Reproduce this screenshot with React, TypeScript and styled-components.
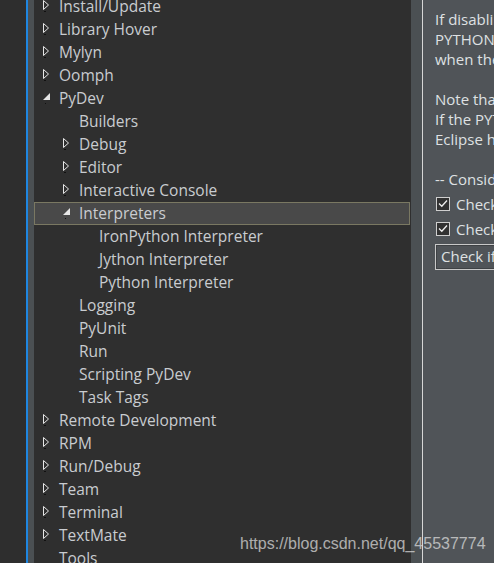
import React from "react";
import styled, { createGlobalStyle } from "styled-components";

const GlobalStyle = createGlobalStyle`
  html, body {
    margin: 0;
    padding: 0;
    background: #2f2f2f;
    overflow: hidden;
  }
`;

const Window = styled.div`
  position: relative;
  display: flex;
  width: 494px;
  height: 563px;
  overflow: hidden;
  font-family: "Open Sans", "Noto Sans", sans-serif;
  font-size: 15.5px;
`;

const Gutter = styled.div`
  flex: 0 0 26px;
  background: #2e2e2e;
`;

const BlueRule = styled.div`
  flex: 0 0 2px;
  background: #1f86e0;
`;

const SideStrip = styled.div<{ $w: number }>`
  flex: 0 0 ${(p) => p.$w}px;
  background: #4b5053;
`;

const Divider = styled.div`
  flex: 0 0 1px;
  background: #d6d6d6;
`;

const Tree = styled.div`
  flex: 0 0 377px;
  background: #2f2f2f;
  overflow: hidden;
`;

const TreeList = styled.div`
  margin-top: -5px;
`;

const Row = styled.div<{ $level: number; $selected?: boolean }>`
  display: flex;
  align-items: center;
  box-sizing: border-box;
  height: 23px;
  padding-left: ${(p) => 8 + p.$level * 20}px;
  padding-bottom: 1px;
  color: #c9ccd0;
  white-space: nowrap;
  background: ${(p) => (p.$selected ? "#494949" : "transparent")};
  border: 1px solid ${(p) => (p.$selected ? "#7a7862" : "transparent")};
  margin-right: 1px;
`;

const Twisty = styled.span`
  flex: 0 0 16px;
  height: 20px;
  display: flex;
  align-items: center;
`;

const Panel = styled.div`
  flex: 1;
  background: #505458;
  padding: 9px 0 0 12px;
  overflow: hidden;
  color: #dfe1e3;
  white-space: nowrap;
  font-size: 15px;
`;

const Line = styled.div`
  height: 20px;
  line-height: 20px;
`;

const Gap = styled.div<{ $h: number }>`
  height: ${(p) => p.$h}px;
`;

const CheckRow = styled.div`
  display: flex;
  align-items: center;
  gap: 6px;
  height: 25px;
  padding-left: 1px;
`;

const Box = styled.span`
  flex: 0 0 14px;
  width: 14px;
  height: 14px;
  box-sizing: border-box;
  border: 1px solid #cfcfcf;
  background: #323232;
  display: flex;
  align-items: center;
  justify-content: center;
`;

const Button = styled.div`
  margin-top: 3px;
  height: 26px;
  box-sizing: border-box;
  border: 1px solid #c8c8c8;
  box-shadow: inset 0 0 0 1px #3e4144;
  padding-left: 5px;
  line-height: 23px;
  width: 300px;
`;

const Watermark = styled.div`
  position: absolute;
  left: 240px;
  top: 535px;
  font-family: "Liberation Sans", Arial, sans-serif;
  font-size: 16px;
  color: rgba(225, 225, 225, 0.72);
  white-space: nowrap;
`;

const Collapsed = () => (
  <svg width="8" height="12" viewBox="0 0 8 12">
    <path d="M0.5 0.5 L5.5 5 L0.5 9.5 Z" fill="none" stroke="#e6e6e6" strokeWidth="1" />
    <rect x="1" y="11" width="2" height="1" fill="#111" />
  </svg>
);

const Expanded = () => (
  <svg width="8" height="12" viewBox="0 0 8 12">
    <path d="M7 1 L7 8 L0 8 Z" fill="#e6e6e6" />
    <rect x="2" y="11" width="1" height="1" fill="#111" />
  </svg>
);

type Node = { label: string; level: number; state?: "open" | "closed"; selected?: boolean };

const nodes: Node[] = [
  { label: "Install/Update", level: 0, state: "closed" },
  { label: "Library Hover", level: 0, state: "closed" },
  { label: "Mylyn", level: 0, state: "closed" },
  { label: "Oomph", level: 0, state: "closed" },
  { label: "PyDev", level: 0, state: "open" },
  { label: "Builders", level: 1 },
  { label: "Debug", level: 1, state: "closed" },
  { label: "Editor", level: 1, state: "closed" },
  { label: "Interactive Console", level: 1, state: "closed" },
  { label: "Interpreters", level: 1, state: "open", selected: true },
  { label: "IronPython Interpreter", level: 2 },
  { label: "Jython Interpreter", level: 2 },
  { label: "Python Interpreter", level: 2 },
  { label: "Logging", level: 1 },
  { label: "PyUnit", level: 1 },
  { label: "Run", level: 1 },
  { label: "Scripting PyDev", level: 1 },
  { label: "Task Tags", level: 1 },
  { label: "Remote Development", level: 0, state: "closed" },
  { label: "RPM", level: 0, state: "closed" },
  { label: "Run/Debug", level: 0, state: "closed" },
  { label: "Team", level: 0, state: "closed" },
  { label: "Terminal", level: 0, state: "closed" },
  { label: "TextMate", level: 0, state: "closed" },
  { label: "Tools", level: 0 },
];

const Check = () => (
  <svg width="10" height="9" viewBox="0 0 10 9">
    <path d="M1 4.5 L3.8 7.3 L9 1.5" fill="none" stroke="#f0f0f0" strokeWidth="1.3" />
  </svg>
);

const App: React.FC = () => {
  return (
    <Window>
      <GlobalStyle />
      <Gutter />
      <BlueRule />
      <SideStrip $w={6} />
      <Tree>
        <TreeList>
          {nodes.map((n) => (
            <Row key={n.label} $level={n.level} $selected={n.selected}>
              <Twisty>
                {n.state === "closed" && <Collapsed />}
                {n.state === "open" && <Expanded />}
              </Twisty>
              {n.label}
            </Row>
          ))}
        </TreeList>
      </Tree>
      <SideStrip $w={11} />
      <Divider />
      <Panel>
        <Line>If disabling checks, it's possible to manually check the</Line>
        <Line>PYTHONPATH in the interpreter configuration page</Line>
        <Line>when the interpreter is changed.</Line>
        <Gap $h={20} />
        <Line>Note that checks are done in the background.</Line>
        <Line>If the PYTHONPATH is changed, a restart of</Line>
        <Line>Eclipse has to be done.</Line>
        <Gap $h={20} />
        <Line>-- Consider the settings below --</Line>
        <Gap $h={2} />
        <CheckRow>
          <Box>
            <Check />
          </Box>
          Check for new modules on startup
        </CheckRow>
        <CheckRow>
          <Box>
            <Check />
          </Box>
          Check when PYTHONPATH changes
        </CheckRow>
        <Button>Check if interpreters are synchronized</Button>
      </Panel>
      <Watermark>https://blog.csdn.net/qq_45537774</Watermark>
    </Window>
  );
};

export default App;
